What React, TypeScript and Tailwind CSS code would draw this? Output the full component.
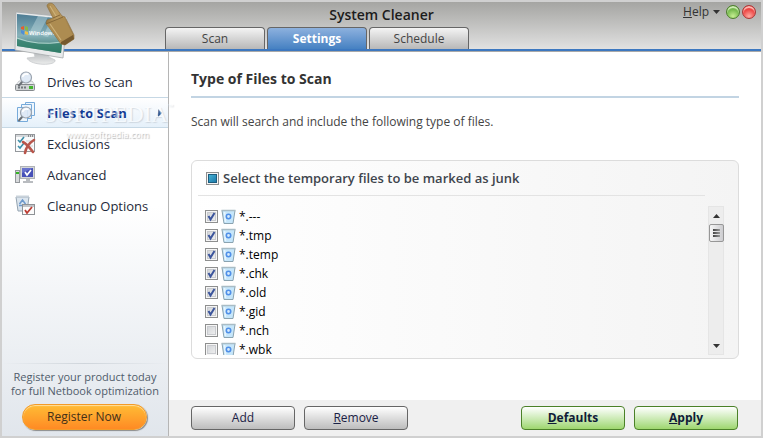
import { useState } from "react";
import clsx from "clsx";

const fileTypes = [
  { name: "*.---", checked: true },
  { name: "*.tmp", checked: true },
  { name: "*.temp", checked: true },
  { name: "*.chk", checked: true },
  { name: "*.old", checked: true },
  { name: "*.gid", checked: true },
  { name: "*.nch", checked: false },
  { name: "*.wbk", checked: false },
];

const tabs = ["Scan", "Settings", "Schedule"];

const Magnifier = ({ x = 0, y = 0 }: { x?: number; y?: number }) => (
  <g transform={`translate(${x} ${y})`}>
    <path d="M4 11 1 14.500" stroke="#6b7076" strokeWidth="2" strokeLinecap="round" />
    <circle cx="8" cy="6.500" r="5.500" fill="#dde8f5" fillOpacity="0.9" stroke="#9aa3ae" strokeWidth="1.200" />
    <path d="M4.500 6a4 4 0 0 1 6-2.500" stroke="#fff" strokeWidth="1.600" fill="none" />
  </g>
);

const DriveIcon = () => (
  <svg width="22" height="22" viewBox="0 0 22 22">
    <path d="M4 10h13l3 4H1z" fill="#eceef0" stroke="#b4b8bc" strokeWidth="0.700" />
    <rect x="0.500" y="13.500" width="19" height="6" rx="1" fill="#cfd2d4" stroke="#85898d" />
    <path d="M3 16.500h8" stroke="#73787d" strokeWidth="2" strokeDasharray="2 1" />
    <rect x="14" y="15" width="4" height="3" fill="#45b62f" />
    <Magnifier x={3} y={0} />
  </svg>
);

const FilesIcon = () => (
  <svg width="22" height="22" viewBox="0 0 22 22">
    <g fill="#eef6fd" stroke="#76aada">
      <path d="M10.500 0.500h9v13h-9z" />
      <path d="M6.500 2.500h10v14h-10z" />
      <path d="M2.500 5.500h10v14h-10z" />
    </g>
    <Magnifier x={3} y={4} />
  </svg>
);

const ExclusionsIcon = () => (
  <svg width="22" height="22" viewBox="0 0 22 22">
    <rect x="0.500" y="1.500" width="19" height="17" fill="#fafbfc" stroke="#94989c" />
    <path d="M1 3h18" stroke="#d5d8db" strokeWidth="2" />
    <path d="M13 3h1M15 3h1M17 3h1" stroke="#444" />
    <path d="m3 7 2 2 4-5M3 13l2 2 4-5" stroke="#3b8ea8" strokeWidth="1.600" fill="none" />
    <path d="M11 8h7M11 13h7" stroke="#cfd3d7" />
    <path d="M8 9c4 2 7 6 10 10M19 7c-5 3-8 7-9 13" stroke="#b8564c" strokeWidth="2.600" fill="none" strokeLinecap="round" />
  </svg>
);

const AdvancedIcon = () => (
  <svg width="22" height="22" viewBox="0 0 22 22">
    <rect x="0.500" y="6.500" width="4" height="12" fill="#d8dadc" stroke="#94989c" />
    <rect x="1" y="8" width="3" height="2" fill="#35b523" />
    <rect x="5.500" y="2.500" width="14" height="12" fill="#d4d6d9" stroke="#b0b3b7" />
    <rect x="7" y="4" width="11" height="9" fill="#4650b8" />
    <path d="M7 4h11L7 9z" fill="#6973cd" />
    <path d="m10 8 2 3 4-5" stroke="#fff" strokeWidth="1.700" fill="none" />
    <path d="M11 15h4v2h3v2H8v-2h3z" fill="#b9bcc0" />
  </svg>
);

const CleanupIcon = () => (
  <svg width="22" height="22" viewBox="0 0 22 22">
    <path d="M1 2h13l-2 14H3z" fill="#dbe5ee" stroke="#95a4b1" />
    <path d="M1 1.500h13" stroke="#c9d2da" strokeWidth="2" />
    <path d="m4.500 9 3-4 3 4M4 10.500h3M8.500 10.500h2.500" stroke="#6c98cb" strokeWidth="1.500" fill="none" />
    <rect x="7.500" y="9.500" width="12" height="10" fill="#fbfbfb" stroke="#8e9296" />
    <path d="M8 11h11" stroke="#c1c4c8" strokeWidth="2" />
    <path d="m10 15 2 3 5-6" stroke="#bd3c32" strokeWidth="1.800" fill="none" />
  </svg>
);

const BinIcon = () => (
  <svg width="15" height="16" viewBox="0 0 15 16">
    <path d="M1 1.500h13L12 14.500H3z" fill="#c6e6fa" stroke="#8aa3b0" />
    <path d="M0.500 1.500h14" stroke="#a9bcc5" strokeWidth="1.500" />
    <path d="M3.500 3l1 10" stroke="#e8f5fd" strokeWidth="1.500" />
    <circle cx="7.500" cy="7.500" r="2.200" fill="#d4eafc" stroke="#4f8fe8" strokeWidth="1.600" />
  </svg>
);

const AppLogo = () => (
  <svg width="68" height="66" viewBox="0 0 68 66">
    <defs>
      <linearGradient id="screen" x1="0" y1="0" x2="0" y2="1">
        <stop offset="0" stopColor="#4d7c94" />
        <stop offset="0.550" stopColor="#86b1b9" />
        <stop offset="1" stopColor="#2f7263" />
      </linearGradient>
      <linearGradient id="brush" x1="0" y1="0.600" x2="1" y2="0.300">
        <stop offset="0" stopColor="#94743f" />
        <stop offset="0.450" stopColor="#bd9c60" />
        <stop offset="1" stopColor="#947240" />
      </linearGradient>
      <linearGradient id="stand" x1="0" y1="0" x2="0" y2="1">
        <stop offset="0" stopColor="#b9bcbe" />
        <stop offset="1" stopColor="#eceded" />
      </linearGradient>
    </defs>
    <path d="M24 51h14l1 4 6 3c2 6-25 6-28-2l8-1z" fill="url(#stand)" stroke="#c6c9cb" strokeWidth="0.800" />
    <path d="M6 10 57 15 53 56 5 48z" fill="#e8eaeb" stroke="#a7abad" strokeWidth="0.800" />
    <path d="M7 12 55 17 51 51 7 44z" fill="url(#screen)" />
    <path d="M28 14 38 15 28 34 18 33zM42 16l6 1-10 18-5-1z" fill="#d6ecee" fillOpacity="0.350" />
    <path d="M7 37q20 7 45 4l-1 10L7 44z" fill="#2f8068" fillOpacity="0.700" />
    <path d="M7 36q20 8 45 4" stroke="#c0e4d8" strokeWidth="0.800" fill="none" />
    <path d="m11 25 3-1v4l-3-1z" fill="#e35e30" />
    <path d="m15 24 3 1v4l-3-1z" fill="#86b84b" />
    <path d="m11 28 3 1v4l-3-2z" fill="#4f8ed5" />
    <path d="m15 29 3 1v3l-3-1z" fill="#eec046" />
    <text x="19" y="33" fontSize="6" fill="#fff" fontFamily="Open Sans" fontWeight="600">
      Windows
    </text>
    <path
      d="M37 4c0-3 5-4 7-1l8 11 3 1 9 18v4l-9 6-4-1-15-21 1-3 6-2z"
      fill="url(#brush)"
      stroke="#8a6b38"
      strokeWidth="0.600"
    />
    <path d="m36 22 17-7 10 18-12 7z" fill="#ad8c51" />
    <path d="m51 40 12-7 1 4-9 6-4-1z" fill="#775a2e" />
    <path d="m43 16 7-3M36 22l17-7" stroke="#7c6032" strokeWidth="0.800" />
    <path d="M40 4l6 10M40 22l11 16" stroke="#cdb27a" strokeWidth="1.200" />
  </svg>
);

const navItems = [
  { label: "Drives to Scan", icon: <DriveIcon /> },
  { label: "Files to Scan", icon: <FilesIcon /> },
  { label: "Exclusions", icon: <ExclusionsIcon /> },
  { label: "Advanced", icon: <AdvancedIcon /> },
  { label: "Cleanup Options", icon: <CleanupIcon /> },
];

const checkbox =
  "size-[13px] shrink-0 appearance-none border border-[#8e8f8f] bg-linear-to-br from-[#cdd0d4] to-[#f4f4f4] shadow-[inset_0_0_0_1px_#f6f6f6,inset_0_0_0_2px_#c9cbcf]";

const greyButton =
  "h-6 w-[104px] rounded border border-[#666] bg-linear-to-b from-white to-[#bdbdbd] text-xs text-[#1a2145]";
const greenButton =
  "h-6 w-[104px] rounded border border-[#4b8128] bg-linear-to-b from-white to-[#9ed66e] text-xs font-bold text-[#101c38]";

const App = () => {
  const [files, setFiles] = useState(fileTypes);
  const [activeTab, setActiveTab] = useState("Settings");
  const [activeNav, setActiveNav] = useState("Files to Scan");

  const toggle = (name: string) =>
    setFiles(files.map((f) => (f.name === name ? { ...f, checked: !f.checked } : f)));

  return (
    <div className="flex min-h-screen flex-col border-2 border-[#d0d0d0] bg-white font-['Open_Sans','Noto_Sans',sans-serif] text-[13px] leading-4 text-[#1f2a3a]">
      <header className="relative flex h-[50px] shrink-0 flex-col items-center justify-between border-b border-[#a9a9a9] bg-linear-to-b from-[#a5a5a2] to-[#e4e4e4]">
        <div className="absolute top-0 left-2 z-10">
          <AppLogo />
        </div>
        <h1 className="pt-[3px] text-sm leading-5 font-semibold text-[#1c1c1c]">System Cleaner</h1>
        <div className="flex w-full gap-0.5 border-b-2 border-[#3d78c0] pl-[163px]">
          {tabs.map((tab) => (
            <button
              key={tab}
              onClick={() => setActiveTab(tab)}
              className={clsx(
                "h-[22px] w-[100px] rounded-t-[4px] border border-b-0 border-[#666] text-xs",
                tab === activeTab
                  ? "bg-linear-to-b from-[#8db1de] to-[#4581c2] font-bold text-white"
                  : "bg-linear-to-b from-[#f4f4f4] to-[#b8b8b8] text-[#444]"
              )}
            >
              {tab}
            </button>
          ))}
        </div>
        <div className="absolute top-0.5 right-[5px] flex items-center gap-0.5">
          <button className="mr-1 flex items-center gap-1 text-xs text-[#333]">
            <span>
              <u>H</u>elp
            </span>
            <svg width="7" height="4" viewBox="0 0 7 4">
              <path d="M0 0h7L3.500 4z" fill="#333" />
            </svg>
          </button>
          <button
            aria-label="Minimize"
            className="size-3.5 rounded-full border border-[#4c7d2c] bg-[radial-gradient(circle_at_50%_85%,#c6ee92,#62ac3c_70%)] shadow-[inset_0_2px_1px_#d5efbb]"
          />
          <button
            aria-label="Close"
            className="size-3.5 rounded-full border border-[#a93636] bg-[radial-gradient(circle_at_50%_85%,#ffaaa2,#e82d2d_70%)] shadow-[inset_0_2px_1px_#ffc0b8]"
          />
        </div>
      </header>

      <div className="flex flex-1">
        <aside className="relative flex w-[167px] shrink-0 flex-col border-r border-[#b5b5b5] bg-linear-to-b from-white from-40% to-[#e1e6ec]">
          <nav className="pt-[14px]">
            {navItems.map(({ label, icon }) => (
              <button
                key={label}
                onClick={() => setActiveNav(label)}
                className={clsx(
                  "flex h-[31px] w-full items-center gap-2.5 border-y pl-[13px] text-left",
                  label === activeNav
                    ? "border-[#c6d8e5] bg-linear-to-b from-white to-[#e5f0fa] font-bold text-[#123a93]"
                    : "border-transparent"
                )}
              >
                {icon}
                {label}
                {label === activeNav && (
                  <svg className="mr-1.5 ml-auto" width="4" height="8" viewBox="0 0 4 8">
                    <path d="M0 0v8l4-4z" fill="#33598f" />
                  </svg>
                )}
              </button>
            ))}
          </nav>

          {/* watermark */}
          <div className="pointer-events-none absolute top-[51px] left-[42px] z-10 whitespace-nowrap text-white">
            <div className="flex items-start font-['Liberation_Serif',serif] text-[23px] leading-6 opacity-50 [text-shadow:1px_1px_1px_#b4bcc6]">
              SOFTPEDIA
              <span className="font-['Open_Sans',sans-serif] text-[7px] leading-2">™</span>
            </div>
            <div className="pl-[22px] font-['Open_Sans',sans-serif] text-[9px] leading-4 opacity-80 [text-shadow:1px_1px_1px_#9a9a9a]">
              www.softpedia.com
            </div>
          </div>

          <div className="mt-auto flex flex-col items-center pb-1.5 text-[11px] leading-[14px] text-[#505c6b]">
            <div className="mb-1.5 h-px w-full bg-linear-to-r from-transparent via-[#cfd5db] to-transparent" />
            <p className="text-center whitespace-nowrap">
              Register your product today
              <br />
              for full Netbook optimization
            </p>
            <button className="mt-1.5 mr-0.5 h-[26px] w-[125px] rounded-full border border-[#f39b28] bg-linear-to-b from-[#ffbc35] to-[#ff8a24] text-xs text-[#433018] shadow-[1px_1px_1px_#8b8b8b,inset_0_1px_1px_#ffe0a0]">
              Register Now
            </button>
          </div>
        </aside>

        <main className="flex min-w-0 flex-1 flex-col">
          <section className="flex-1 px-[22px]">
            <h2 className="border-b-2 border-[#c2d4e3] pt-[17px] pb-[7px] text-sm leading-5 font-bold text-[#333]">
              Type of Files to Scan
            </h2>
            <p className="mt-4 text-xs text-[#444]">Scan will search and include the following type of files.</p>

            <div className="mt-[30px] rounded-md border border-[#dcdcdc] bg-linear-to-r from-white to-[#f4f4f4]">
              <label className="mr-[33px] ml-1.5 flex h-[35px] items-center gap-1 border-b border-[#e3e3e3] pl-2 font-semibold text-[#3f454d]">
                <input
                  type="checkbox"
                  className="size-[13px] appearance-none border border-[#8e8f8f] bg-linear-to-br from-[#4fc2e0] to-[#126b9e] shadow-[inset_0_0_0_1px_#f4f4f4,inset_0_0_0_2px_#1c5c7e]"
                />
                Select the temporary files to be marked as junk
              </label>
              <div className="mt-2.5 mr-3.5 mb-[3px] flex h-[149px]">
                <ul className="flex-1 overflow-hidden pt-px pl-[13px]">
                  {files.map((file) => (
                    <li key={file.name} className="h-[19px]">
                      <label className="flex h-[19px] items-center gap-[3px] text-xs text-black">
                        <span className="relative flex">
                          <input
                            type="checkbox"
                            checked={file.checked}
                            onChange={() => toggle(file.name)}
                            className={checkbox}
                          />
                          {file.checked && (
                            <svg
                              className="pointer-events-none absolute inset-0"
                              width="13"
                              height="13"
                              viewBox="0 0 13 13"
                            >
                              <path d="m3.500 6 2 3.500L9.500 3" fill="none" stroke="#3c559c" strokeWidth="2" />
                            </svg>
                          )}
                        </span>
                        <BinIcon />
                        {file.name}
                      </label>
                    </li>
                  ))}
                </ul>
                <div className="flex w-4 flex-col items-center border border-[#e5e5e5] bg-[#ededed]">
                  <button aria-label="Scroll up" className="flex h-[17px] w-full items-center justify-center">
                    <svg width="7" height="4" viewBox="0 0 7 4">
                      <path d="M0 4h7L3.500 0z" fill="#333" />
                    </svg>
                  </button>
                  <div className="flex h-[18px] w-[15px] flex-col items-center justify-center gap-px rounded-xs border border-[#979797] bg-linear-to-r from-[#f6f6f6] to-[#cdcdd0]">
                    <span className="h-0.5 w-[7px] bg-linear-to-r from-[#444] to-[#999]" />
                    <span className="h-0.5 w-[7px] bg-linear-to-r from-[#444] to-[#999]" />
                    <span className="h-0.5 w-[7px] bg-linear-to-r from-[#444] to-[#999]" />
                  </div>
                  <button
                    aria-label="Scroll down"
                    className="mt-auto flex h-[17px] w-full items-center justify-center"
                  >
                    <svg width="7" height="4" viewBox="0 0 7 4">
                      <path d="M0 0h7L3.500 4z" fill="#333" />
                    </svg>
                  </button>
                </div>
              </div>
            </div>
          </section>

          <footer className="flex h-9 items-center gap-[9px] bg-[#f0f0f0] pr-[23px] pl-[22px]">
            <button className={greyButton}>Add</button>
            <button className={greyButton}>
              <u>R</u>emove
            </button>
            <button className={clsx(greenButton, "ml-auto")}>
              <u>D</u>efaults
            </button>
            <button className={greenButton}>
              <u>A</u>pply
            </button>
          </footer>
        </main>
      </div>
    </div>
  );
};

export default App;
